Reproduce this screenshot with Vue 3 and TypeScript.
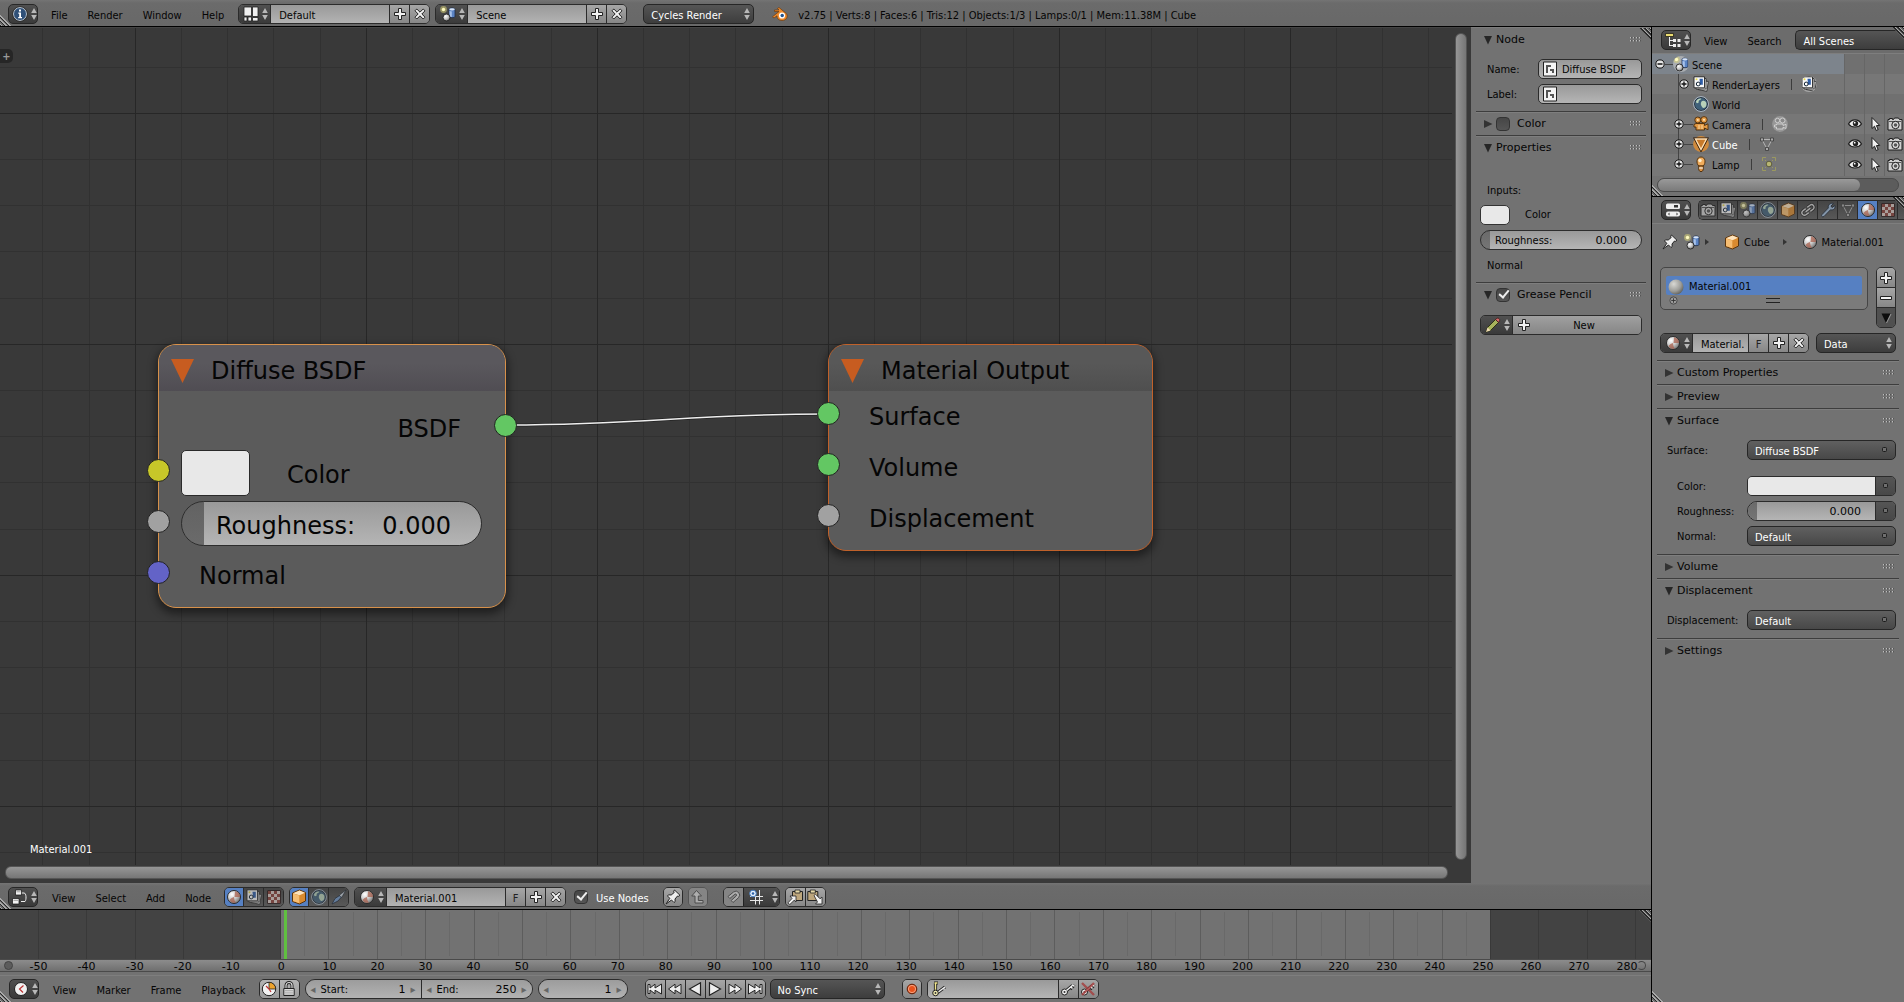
<script setup lang="ts">
import { ref } from 'vue'

interface TreeRow {
  name: string
  icon: string
  kind: 'root' | 'layer' | 'leaf' | 'object'
  data?: string
  active?: boolean
}

const infoMenus = ['File', 'Render', 'Window', 'Help']
const nodeMenus = ['View', 'Select', 'Add', 'Node']
const timeMenus = ['View', 'Marker', 'Frame', 'Playback']
const stats = 'v2.75 | Verts:8 | Faces:6 | Tris:12 | Objects:1/3 | Lamps:0/1 | Mem:11.38M | Cube'

const rows: TreeRow[] = [
  { name: 'Scene', icon: 'scene', kind: 'root' },
  { name: 'RenderLayers', icon: 'layers', kind: 'layer', data: 'layers' },
  { name: 'World', icon: 'world', kind: 'leaf' },
  { name: 'Camera', icon: 'camera', kind: 'object', data: 'camera-data' },
  { name: 'Cube', icon: 'mesh', kind: 'object', data: 'mesh-data', active: true },
  { name: 'Lamp', icon: 'lamp', kind: 'object', data: 'lamp-data' },
]

const tabs = ['photo', 'layers', 'scene', 'world', 'cube', 'chain', 'wrench', 'mesh-data', 'material', 'texture']
const activeTab = ref('material')

const frames = Array.from({ length: 34 }, (_, i) => (i - 5) * 10)
const transport = [
  { icon: 'first', label: 'Jump to start' },
  { icon: 'prev', label: 'Previous keyframe' },
  { icon: 'back', label: 'Play reversed' },
  { icon: 'play', label: 'Play' },
  { icon: 'next', label: 'Next keyframe' },
  { icon: 'last', label: 'Jump to end' },
]

const useNodes = ref(true)
const nodeColor = ref(false)
const grease = ref(true)
</script>

<template>
  <svg class="defs" aria-hidden="true">
    <defs>
      <radialGradient id="g-ball" cx=".35" cy=".3" r=".8">
        <stop offset="0" stop-color="#fff" /><stop offset=".5" stop-color="#c9c9c9" /><stop offset="1" stop-color="#666" />
      </radialGradient>
      <radialGradient id="g-grey" cx=".35" cy=".3" r=".8">
        <stop offset="0" stop-color="#d8d8d4" /><stop offset=".6" stop-color="#9c9c98" /><stop offset="1" stop-color="#55554f" />
      </radialGradient>
      <pattern id="grid" width="231" height="231" x="135" y="85" patternUnits="userSpaceOnUse">
        <path d="M46.5 0V231M92.5 0V231M138.5 0V231M185.5 0V231M0 46.5H231M0 92.5H231M0 138.5H231M0 185.5H231" stroke="#313131" />
        <path d="M.5 0V231M0 .5H231" stroke="#272727" />
      </pattern>
      <pattern id="ticks-dark" width="242" height="60" x="38" patternUnits="userSpaceOnUse">
        <path d="M.5 0V60M48.5 0V60M97.5 0V60M145.5 0V60M194.5 0V60" stroke="#393939" />
      </pattern>
      <pattern id="ticks" width="242" height="60" x="-1" patternUnits="userSpaceOnUse">
        <path d="M.5 0V60M48.5 0V60M97.5 0V60M145.5 0V60M194.5 0V60" stroke="#5d5d5d" />
        <path d="M24.5 2V46M73.5 2V46M121.5 2V46M169.5 2V46M218.5 2V46" stroke="#696969" />
      </pattern>
    </defs>
    <symbol id="i-arrows" viewBox="0 0 6 12"><path d="M3 0 5.800 5H.2zM3 12 5.800 7H.2z" fill="#b8b8b8" /></symbol>
    <symbol id="i-info" viewBox="0 0 16 16">
      <circle cx="8" cy="8" r="6.500" fill="#2f5078" stroke="#c6d0dc" /><circle cx="8" cy="8" r="7.400" fill="none" stroke="#222" stroke-width=".6" />
      <path d="M7 3.500h2v2H7zM6.300 6.500H9v4.500h1v1.300H6.200V11h1V7.800h-.9z" fill="#fff" />
    </symbol>
    <symbol id="i-layout" viewBox="0 0 16 16">
      <path d="M1 1h7.500v9H1zM9.500 1H15v9.500H9.500zM1 11h3v4H1zM5 11h3.500v4H5zM9.500 11.500H15V15H9.500z" fill="#f0f0f0" stroke="#222" stroke-width=".8" />
    </symbol>
    <symbol id="i-scene" viewBox="0 0 16 16">
      <circle cx="3.500" cy="3.500" r="3.400" fill="#d9d47a" opacity=".55" /><circle cx="3.500" cy="3.500" r="1.700" fill="#fffbc0" />
      <path d="M9 3.500c0-2 6-2 6 0v7c0 1.600-6 1.600-6 0z" fill="#5b84c4" stroke="#1c2a44" stroke-width=".8" />
      <path d="M9.500 4.500c.5.700 1.500.9 2.300.9V11c-1 0-1.800-.2-2.300-.7z" fill="#a9c3ea" />
      <ellipse cx="12" cy="3.300" rx="2.800" ry="1.100" fill="#d9e6f9" />
      <circle cx="6.500" cy="11.500" r="3.500" fill="url(#g-ball)" stroke="#222" stroke-width=".9" />
    </symbol>
    <symbol id="i-plus" viewBox="0 0 16 16"><path d="M6.500 2.500h3v4h4v3h-4v4h-3v-4h-4v-3h4z" fill="#f2f2f2" stroke="#222" /></symbol>
    <symbol id="i-minus" viewBox="0 0 16 16"><path d="M2.500 6.500h11v3h-11z" fill="#f2f2f2" stroke="#222" /></symbol>
    <symbol id="i-x" viewBox="0 0 16 16"><path d="M3 4.800 4.800 3 8 6.200 11.200 3 13 4.800 9.800 8l3.200 3.200-1.800 1.800L8 9.800 4.800 13 3 11.200 6.200 8z" fill="#f2f2f2" stroke="#222" /></symbol>
    <symbol id="i-down" viewBox="0 0 16 16"><path d="M3.500 3.500h9L8 13z" fill="#0d0d0d" /><path d="M13 4 8.500 13" stroke="#999" /></symbol>
    <symbol id="i-blender" viewBox="0 0 16 16">
      <path d="M.5 10.800 7 5.500H2.500V4H7L5.500 2.500 7 1.500l7.500 6.200c1.800 2.800 0 6.800-4.500 6.800-3 0-5.300-1.800-5-4.700L2 12z" fill="#ee8a2c" stroke="#6d3a0b" stroke-width=".7" />
      <circle cx="10" cy="9.500" r="3.100" fill="#fff" /><circle cx="10.200" cy="9.500" r="1.700" fill="#23548f" />
    </symbol>
    <symbol id="i-tree" viewBox="0 0 16 16">
      <path d="M4.500 5v9M4.500 8.500H8M4.500 13.500H8" stroke="#eee" fill="none" />
      <path d="M.5 1.500h8v3h-8z" fill="#eadb70" stroke="#111" stroke-width=".7" /><path d="M8 7h3v3H8zM12.500 7h3v3h-3zM8 12h3v3H8zM12.500 12h3v3h-3z" fill="#eee" />
    </symbol>
    <symbol id="i-layers" viewBox="0 0 16 16">
      <path d="m6 4 9.300 1.500-1.500 9.800L5 13.500z" fill="#ddd" stroke="#222" stroke-width=".8" /><path d="M3 2.500h10v10.500H3z" fill="#e6e6e6" stroke="#222" stroke-width=".8" />
      <path d="M1 .8h10.500v11H1z" fill="#f8f8f8" stroke="#222" stroke-width=".9" />
      <path d="M6.500 2.800h3.300v6H7z" fill="#2f5ea8" /><circle cx="5.200" cy="8" r="1.900" fill="#fff" stroke="#123" /><circle cx="3.500" cy="3.300" r="1" fill="#e8d94a" />
    </symbol>
    <symbol id="i-world" viewBox="0 0 16 16">
      <circle cx="8" cy="8" r="6.600" fill="#3f6079" stroke="#1c2733" /><circle cx="8" cy="8" r="7.400" fill="none" stroke="#b9cbe0" stroke-width=".8" />
      <path d="M3 5.500C4 3 6 2.200 8 2.500c1 .5-1 1.500-2 2s.5 2-1 2.500-2-.5-2-1.500zM8.500 5.500C10 4 13.500 5 13.500 8s-2 4-3 4-2-2-2.500-3 0-2.500.5-3.500z" fill="#b9d2b9" />
    </symbol>
    <symbol id="i-camera" viewBox="0 0 16 16">
      <g fill="#e39a45" stroke="#4d2b07" stroke-width=".9"><circle cx="4.800" cy="4" r="3" /><circle cx="11" cy="3.800" r="3.200" /><path d="M3 7.500h8.500v2l3.500-1.700v6l-3.500-1.800V14H3V11H1V8.500z" /></g>
      <circle cx="4.800" cy="4" r="1" fill="#ffe2b0" /><circle cx="11" cy="3.800" r="1.100" fill="#ffe2b0" /><path d="M6 9v4M9 9v4" stroke="#fbd9a4" />
    </symbol>
    <symbol id="i-camera-data" viewBox="0 0 16 16">
      <circle cx="8" cy="8" r="7.900" fill="#979797" /><g fill="#8a8a8a" stroke="#d4d4d4" stroke-width=".9"><circle cx="5.500" cy="4.500" r="2.200" /><circle cx="10.500" cy="4.500" r="2.500" /><path d="M4.500 8h6.500v1.500L14 8.300v4.200l-3-1.300V13H4.500v-2H2.500V9h2z" /></g>
    </symbol>
    <symbol id="i-mesh" viewBox="0 0 16 16">
      <circle cx="8" cy="8" r="7.900" fill="#d08a3c" /><path d="M2.500 3h11L8 13.500z" fill="none" stroke="#2b1503" stroke-width="3" /><path d="M2.500 3h11L8 13.500z" fill="#c87a2a" stroke="#ffe0b4" stroke-width="1.400" />
    </symbol>
    <symbol id="i-lamp" viewBox="0 0 16 16">
      <path d="M5.800 10C3 7.500 3.300 1 8 1s5 6.500 2.200 9z" fill="#f0ac5c" stroke="#4d2b07" stroke-width=".9" /><circle cx="7" cy="4.500" r="1.700" fill="#fff0cf" /><path d="M5.800 10h4.400v4L9 15.500H7L5.800 14z" fill="#d99244" stroke="#4d2b07" stroke-width=".9" /><path d="M6 12h4" stroke="#fff" />
    </symbol>
    <symbol id="i-mesh-data" viewBox="0 0 16 16">
      <path d="M3 3.500h10L8 13z" fill="none" stroke="#b4b4b4" /><path d="M1.500 2h3v3h-3zM11.500 2h3v3h-3zM6.500 11.500h3v3h-3z" fill="#a9a9a9" stroke="#3a3a3a" stroke-width=".8" />
    </symbol>
    <symbol id="i-lamp-data" viewBox="0 0 16 16">
      <g opacity=".8"><circle cx="8" cy="8" r="2.800" fill="#c9c572" stroke="#55542e" /><path d="M1.500 5V1.500H5M11 1.500h3.500V5M14.500 11v3.500H11M5 14.500H1.500V11M4 4l1 1M12 4l-1 1M4 12l1-1M12 12l-1-1" fill="none" stroke="#a5a25a" /></g>
    </symbol>
    <symbol id="i-eye" viewBox="0 0 16 16"><path d="M1.500 8c3-5.500 10-5.500 13 0-3 4-10 4-13 0z" fill="#eee" stroke="#1d1d1d" stroke-width="1.200" /><circle cx="8.500" cy="7.500" r="2.700" fill="#222" /><circle cx="7.700" cy="6.700" r=".9" fill="#fff" /></symbol>
    <symbol id="i-cursor" viewBox="0 0 16 16"><path d="M5 1.500v11l2.500-2.300 1.700 4.300 2-.9-1.800-4 3.300-.2z" fill="#f2f2f2" stroke="#1d1d1d" /></symbol>
    <symbol id="i-photo" viewBox="0 0 16 16">
      <path d="M1 3.500h1.500v-1h3v1h1l1-1.500h4l1 1.500H15V14H1z" fill="#cfcfcf" stroke="#1d1d1d" /><path d="M2 5.500h12" stroke="#555" /><circle cx="8.500" cy="9" r="3.700" fill="#ddd" stroke="#1d1d1d" /><circle cx="8.500" cy="9" r="1.800" fill="#555" />
    </symbol>
    <symbol id="i-props" viewBox="0 0 16 16"><rect x="1" y="1.500" width="14" height="5.500" rx="1.500" fill="#eee" /><path d="M9 3h4v2.500H9z" fill="#333" /><rect x="1" y="9.500" width="14" height="5" rx="2" fill="#eee" /><path d="m3 12 1.500-1.500v3zM13 12l-1.500-1.500v3z" fill="#333" /></symbol>
    <symbol id="i-chain" viewBox="0 0 16 16"><g fill="none" transform="rotate(-38 8 8)"><path d="M7 5.500H3.500a2.500 2.500 0 0 0 0 5H7M9 5.500h3.500a2.500 2.500 0 0 1 0 5H9M5 8h6" stroke="#222" stroke-width="3" /><path d="M7 5.500H3.500a2.500 2.500 0 0 0 0 5H7M9 5.500h3.500a2.500 2.500 0 0 1 0 5H9M5 8h6" stroke="#d4d4d4" stroke-width="1.400" /></g></symbol>
    <symbol id="i-wrench" viewBox="0 0 16 16"><path d="M13.500 1.500 11 4l1 1.500 3-2c.5 3-1.500 5-4.500 4.300L4 14.500c-1.500 1.200-3.300-.5-2-2L8.300 6C7.500 3 10.500.5 13.500 1.500z" fill="#9db8d8" stroke="#1f2a38" /></symbol>
    <symbol id="i-material" viewBox="0 0 16 16"><circle cx="8" cy="8" r="6.500" fill="url(#g-ball)" stroke="#2b2b2b" /><path d="M8.500 8 9 2.300c3 .5 5 2.500 5 5.700zM8 8c.3 2.500.5 4.500 2 5.600-2.500.7-5 0-6.500-2.600C4.500 9.500 6.500 8.300 8 8z" fill="#a8604e" opacity=".75" /></symbol>
    <symbol id="i-texture" viewBox="0 0 16 16"><path d="M1.500 1.500h13v13h-13z" fill="#d9c9c4" stroke="#2a1a1a" /><path d="M2 2h3v3H2zM8 2h3v3H8zM5 5h3v3H5zM11 5h3v3h-3zM2 8h3v3H2zM8 8h3v3H8zM5 11h3v3H5zM11 11h3v3h-3z" fill="#8b3f38" /></symbol>
    <symbol id="i-pin" viewBox="0 0 16 16"><path d="M9.500 1 15 6.300l-1.500 1-1-.3-2.500 3 .2 2.500-1.200 1L6.500 11 1 15l3.800-5.700L2.500 7l1-1.200 2.700.2 3-2.500-.5-1.200z" fill="#eee" stroke="#222" /></symbol>
    <symbol id="i-cube" viewBox="0 0 16 16"><path d="M1.500 4 8.500 1l6 2.500v8.500l-6 3-7-2.500z" fill="#d98a2f" stroke="#5b340c" /><path d="m2 4.300 6.500-2.700L14 3.800 8.500 6.300z" fill="#fde3bd" /><path d="m2 4.500 6.300 2v7.800L2 12z" fill="#f6bd72" /></symbol>
    <symbol id="i-dark-ball" viewBox="0 0 16 16"><circle cx="8" cy="8" r="7.500" fill="url(#g-grey)" /></symbol>
    <symbol id="i-expand" viewBox="0 0 10 10"><circle cx="5" cy="5" r="4.100" fill="#e6e6e6" stroke="#161616" /><path d="M2.500 5h5M5 2.500v5" stroke="#111" stroke-width="1.300" /></symbol>
    <symbol id="i-collapse" viewBox="0 0 10 10"><circle cx="5" cy="5" r="4.100" fill="#e6e6e6" stroke="#161616" /><path d="M2.500 5h5" stroke="#111" stroke-width="1.500" /></symbol>
    <symbol id="i-more" viewBox="0 0 10 10"><circle cx="5" cy="5" r="4" fill="#9c9c9c" stroke="#444" /><path d="M2.500 5h5M5 2.500v5" stroke="#333" /></symbol>
    <symbol id="i-nodes" viewBox="0 0 16 16"><path d="M9 4h3c2.500 0 2.500 7 1 8.500H9" fill="none" stroke="#eee" /><path d="M3.500 1h6v5h-6zM.5 9.500h6.500v5.500H.5z" fill="#f2f2f2" stroke="#111" stroke-width=".7" /><path d="M4.500 2.800h4M1.500 11.300h4.500" stroke="#888" stroke-width=".8" /></symbol>
    <symbol id="i-brush" viewBox="0 0 16 16"><path d="M15 1 9 5.500l-1.500 3L9 9l2-1z" fill="#c3ccd6" stroke="#1a222c" stroke-width=".7" /><path d="M8.500 6.500 4 9.500 1 15l6-3 3-3.500z" fill="#6f96c6" stroke="#15202e" stroke-width=".8" /></symbol>
    <symbol id="i-up" viewBox="0 0 16 16"><path d="M6.500 1.500 11.500 7H8.300v4.500H13V14H5V7H1.700z" fill="#adadad" stroke="#4c4c4c" /></symbol>
    <symbol id="i-magnet" viewBox="0 0 16 16"><path d="M3 7.500 8.500 3a3.800 3.800 0 0 1 5 5.700L8 13.500l-1.800-2 5-4.500c1-1.200-.3-2.500-1.300-1.800L4.800 9.500z" fill="#adadad" stroke="#4c4c4c" /></symbol>
    <symbol id="i-snap" viewBox="0 0 16 16"><path d="M2 7.500h13M2 11.500h13M7.500 6v9.500M11.500 1v14.500" stroke="#e6e6e6" /><circle cx="5" cy="4.500" r="3.300" fill="#e8f1fb" stroke="#3f78bd" /><circle cx="5" cy="4.500" r="1.300" fill="#2c62a8" /></symbol>
    <symbol id="i-copy" viewBox="0 0 16 16"><path d="M5.500 2.500h10v9h-10z" fill="#bda67c" stroke="#222" /><path d="M8 1h5v3H8z" fill="#e6d9a8" stroke="#222" stroke-width=".8" /><path d="M3 7h6v6L7.200 11.300 2.800 15.500 1 13.800 5 9.500z" fill="#f2f2f2" stroke="#222" stroke-width=".8" /></symbol>
    <symbol id="i-paste" viewBox="0 0 16 16"><path d="M.8 2.500h10v9H.8z" fill="#bda67c" stroke="#222" /><path d="M3.300 1h5v3h-5z" fill="#e6d9a8" stroke="#222" stroke-width=".8" /><path d="m7 6.500 1.500-1.300L13 9.800 15 8v7H8.500l2-2z" fill="#f2f2f2" stroke="#222" stroke-width=".8" /></symbol>
    <symbol id="i-clock" viewBox="0 0 16 16"><circle cx="8" cy="8" r="6.500" fill="#f2f2f2" stroke="#222" /><path d="m10.500 4.500-4 3.500 3.500 3.500" fill="none" stroke="#b33" stroke-width="1.200" /></symbol>
    <symbol id="i-range" viewBox="0 0 16 16"><circle cx="8" cy="8" r="6.700" fill="#f2f2f2" stroke="#222" /><path d="M8 8V1.300A6.700 6.700 0 0 1 14.700 8z" fill="#eda22c" stroke="#222" stroke-width=".8" /><path d="m5 5 3 3 2 3" fill="none" stroke="#b33" stroke-width="1.200" /></symbol>
    <symbol id="i-lock" viewBox="0 0 16 16"><path d="M5 8V4.500a3 3 0 0 1 6 0V8" fill="none" stroke="#222" stroke-width="3" /><path d="M5 8V4.500a3 3 0 0 1 6 0V8" fill="none" stroke="#ddd" stroke-width="1.200" /><path d="M2.800 7.500h10.400v7H2.800z" fill="#ddd" stroke="#222" /><path d="M4 9.500h8M4 11.200h8M4 13h8" stroke="#999" stroke-width=".7" /></symbol>
    <symbol id="i-first" viewBox="0 0 16 16"><path d="M1 3.500h2V7l5-3.800V7l6.500-4v10L8 9.200v3.600L3 9v3.500H1z" fill="#eee" stroke="#222" /></symbol>
    <symbol id="i-prev" viewBox="0 0 16 16"><path d="M1.500 8 8 3.200V7l6-3.800v9.600L8 9v3.800z" fill="#eee" stroke="#222" /></symbol>
    <symbol id="i-back" viewBox="0 0 16 16"><path d="M2.500 8 13.500 1.800v12.400z" fill="#eee" stroke="#222" stroke-width="1.200" /></symbol>
    <symbol id="i-play" viewBox="0 0 16 16"><path d="M13.500 8 2.500 1.800v12.400z" fill="#eee" stroke="#222" stroke-width="1.200" /></symbol>
    <symbol id="i-next" viewBox="0 0 16 16"><path d="M14.500 8 8 3.200V7L2 3.200v9.600L8 9v3.800z" fill="#eee" stroke="#222" /></symbol>
    <symbol id="i-last" viewBox="0 0 16 16"><path d="M15 3.500h-2V7L8 3.200V7L1.500 3v10L8 9.200v3.600L13 9v3.500h2z" fill="#eee" stroke="#222" /></symbol>
    <symbol id="i-rec" viewBox="0 0 16 16"><circle cx="8" cy="8" r="4.800" fill="#e8521c" stroke="#5c1c06" /><circle cx="8" cy="8" r="3.600" fill="none" stroke="#f9b79a" stroke-width=".8" /></symbol>
    <symbol id="i-key" viewBox="0 0 16 16"><g fill="none"><path d="m6.500 9.500 6-5M10.500 6l2 2M12.500 4.500l2 1.500" stroke="#222" stroke-width="3.200" /><circle cx="4.500" cy="11" r="3" fill="#eee" stroke="#222" /><path d="m6.500 9.500 6.500-5.500M11 6l1.500 1.500M13 4l1.500 1.500" stroke="#eee" stroke-width="1.500" /><circle cx="4.500" cy="11" r="1" fill="#333" /></g></symbol>
    <symbol id="i-key-set" viewBox="0 0 16 16"><path d="M3 2h4M4.500 2v9M6 12l8-6" stroke="#222" stroke-width="3.200" /><path d="M3.500 2h3M4.500 2v9" stroke="#f0e58c" stroke-width="1.400" /><path d="m6 12 8-6M12 7l1.500 1.500" stroke="#eee" stroke-width="1.500" /><circle cx="4.500" cy="12" r="2.800" fill="#efe9ae" stroke="#222" /><circle cx="4.500" cy="12" r=".9" fill="#333" /></symbol>
    <symbol id="i-strike" viewBox="0 0 16 16"><path d="m2 2 12 12M14 2 2 14" stroke="#a63c3c" stroke-width="2.400" opacity=".8" /></symbol>
    <symbol id="i-pencil" viewBox="0 0 16 16"><path d="m1 15 1.500-4.500L10.500 2.500l3 3-8 8z" fill="#a7b25c" stroke="#26280f" stroke-width=".9" /><path d="m10.500 2.500 1.500-1.300c1.500-.6 3 1 2.600 2.300L13.500 5.500z" fill="#d46a6a" stroke="#401a1a" stroke-width=".8" /><path d="m1 15 1.500-4.500 3 3z" fill="#ecd9b0" /></symbol>
    <symbol id="i-field" viewBox="0 0 16 16"><path d="M1.500 1h13v14h-13z" fill="#f4f4f4" stroke="#222" /><path d="M4 4h5v2H6v6H4zM8 8h4v4h-2v-2H8z" fill="#555" /></symbol>
    <symbol id="i-dot" viewBox="0 0 8 8"><rect x="1.500" y="1.500" width="4" height="4" rx="1" fill="#707070" stroke="#1c1c1c" /></symbol>
    <symbol id="i-tri-down" viewBox="0 0 10 10"><path d="M1 1h8L5 9.500z" fill="#262626" /></symbol>
    <symbol id="i-tri-right" viewBox="0 0 10 10"><path d="M1 1v8l8.500-4z" fill="#333" /></symbol>
  </svg>

  <div class="app">
    <header class="bar info">
      <button class="menu-btn editor" aria-label="Editor type"><svg class="ic"><use href="#i-info" /></svg><svg class="ud"><use href="#i-arrows" /></svg></button>
      <nav class="menus"><button v-for="m in infoMenus" :key="m" class="menu">{{ m }}</button></nav>
      <div class="group">
        <button class="menu-btn" aria-label="Browse screens"><svg class="ic"><use href="#i-layout" /></svg><svg class="ud"><use href="#i-arrows" /></svg></button>
        <input class="field w119" aria-label="Screen" value="Default" />
        <button class="tool" aria-label="Add screen"><svg class="ic"><use href="#i-plus" /></svg></button>
        <button class="tool" aria-label="Delete screen"><svg class="ic"><use href="#i-x" /></svg></button>
      </div>
      <div class="group gap5">
        <button class="menu-btn" aria-label="Browse scenes"><svg class="ic"><use href="#i-scene" /></svg><svg class="ud"><use href="#i-arrows" /></svg></button>
        <input class="field w119" aria-label="Scene" value="Scene" />
        <button class="tool" aria-label="Add scene"><svg class="ic"><use href="#i-plus" /></svg></button>
        <button class="tool" aria-label="Delete scene"><svg class="ic"><use href="#i-x" /></svg></button>
      </div>
      <span class="drop engine"><select aria-label="Render engine"><option>Cycles Render</option></select><svg class="ud"><use href="#i-arrows" /></svg></span>
      <svg class="ic logo"><use href="#i-blender" /></svg>
      <span class="stats">{{ stats }}</span>
      <i class="hatch bl"></i>
    </header>

    <div class="work">
      <main class="left">
        <div class="node-area">
          <section class="canvas">
            <svg class="grid"><rect width="100%" height="100%" fill="url(#grid)" /></svg>
            <svg class="wire"><path d="M505 397C650 397 683 386 828 386" fill="none" stroke="#222" stroke-width="3" /><path d="M505 397C650 397 683 386 828 386" fill="none" stroke="#eee" stroke-width="1.400" /></svg>
            <button class="region-toggle" aria-label="Show tool shelf">+</button>

            <article class="node diffuse">
              <h2><svg class="fold" viewBox="0 0 24 24"><path d="M0 0h23L11.500 24z" fill="#c75c20" /></svg>Diffuse BSDF</h2>
              <div class="out">BSDF<i class="sock source green"></i></div>
              <div class="nrow color"><i class="sock yellow"></i><button class="nswatch" aria-label="Color"></button><span>Color</span></div>
              <div class="nrow"><i class="sock grey"></i>
                <label class="nslider"><span>Roughness:</span><input value="0.000" /></label></div>
              <div class="nrow plain"><i class="sock blue"></i>Normal</div>
            </article>

            <article class="node output">
              <h2><svg class="fold" viewBox="0 0 24 24"><path d="M0 0h23L11.500 24z" fill="#c75c20" /></svg>Material Output</h2>
              <div class="nrow plain"><i class="sock green"></i>Surface</div>
              <div class="nrow plain"><i class="sock green"></i>Volume</div>
              <div class="nrow plain"><i class="sock grey"></i>Displacement</div>
            </article>

            <span class="mat-name">Material.001</span>
            <div class="vbar"></div>
            <div class="hbar"></div>
          </section>

          <aside class="npanel">
            <i class="hatch tr"></i>
            <h3 class="ptitle first"><svg class="tri"><use href="#i-tri-down" /></svg>Node<i class="grip"></i></h3>
            <div class="nfields">
              <label class="frow"><span>Name:</span><span class="iconfield"><svg class="ic"><use href="#i-field" /></svg><input value="Diffuse BSDF" /></span></label>
              <label class="frow"><span>Label:</span><span class="iconfield"><svg class="ic"><use href="#i-field" /></svg><input value="" /></span></label>
            </div>
            <h3 class="ptitle"><svg class="tri"><use href="#i-tri-right" /></svg><label class="check"><input v-model="nodeColor" type="checkbox" />Color</label><i class="grip"></i></h3>
            <h3 class="ptitle"><svg class="tri"><use href="#i-tri-down" /></svg>Properties<i class="grip"></i></h3>
            <div class="nprops">
              <p class="lab">Inputs:</p>
              <div class="crow"><button class="swatch small" aria-label="Color"></button>Color</div>
              <label class="slider"><span>Roughness:</span><input class="num" value="0.000" /></label>
              <p class="lab">Normal</p>
            </div>
            <h3 class="ptitle"><svg class="tri"><use href="#i-tri-down" /></svg><label class="check"><input v-model="grease" type="checkbox" />Grease Pencil</label><i class="grip"></i></h3>
            <div class="group gp">
              <button class="menu-btn" aria-label="Browse grease pencil"><svg class="ic"><use href="#i-pencil" /></svg><svg class="ud"><use href="#i-arrows" /></svg></button>
              <button class="new"><svg class="ic"><use href="#i-plus" /></svg><span>New</span></button>
            </div>
          </aside>
        </div>

        <header class="bar nodes">
          <button class="menu-btn editor" aria-label="Editor type"><svg class="ic"><use href="#i-nodes" /></svg><svg class="ud"><use href="#i-arrows" /></svg></button>
          <nav class="menus"><button v-for="m in nodeMenus" :key="m" class="menu">{{ m }}</button></nav>
          <div class="group">
            <button class="tab on" aria-label="Shader nodes"><svg class="ic"><use href="#i-material" /></svg></button>
            <button class="tab" aria-label="Compositing nodes"><svg class="ic"><use href="#i-layers" /></svg></button>
            <button class="tab" aria-label="Texture nodes"><svg class="ic"><use href="#i-texture" /></svg></button>
          </div>
          <div class="group gap5">
            <button class="tab on" aria-label="Object"><svg class="ic"><use href="#i-cube" /></svg></button>
            <button class="tab" aria-label="World"><svg class="ic"><use href="#i-world" /></svg></button>
            <button class="tab" aria-label="Line style"><svg class="ic"><use href="#i-brush" /></svg></button>
          </div>
          <div class="group gap5">
            <button class="menu-btn" aria-label="Browse materials"><svg class="ic"><use href="#i-material" /></svg><svg class="ud"><use href="#i-arrows" /></svg></button>
            <input class="field w119" aria-label="Material" value="Material.001" />
            <button class="tool letter">F</button>
            <button class="tool" aria-label="Add material"><svg class="ic"><use href="#i-plus" /></svg></button>
            <button class="tool" aria-label="Unlink material"><svg class="ic"><use href="#i-x" /></svg></button>
          </div>
          <label class="check use"><input v-model="useNodes" type="checkbox" /><span>Use Nodes</span></label>
          <div class="group pinbtn"><button class="tool" aria-label="Pin"><svg class="ic"><use href="#i-pin" /></svg></button></div>
          <div class="group gap5"><button class="tool off" aria-label="Go to parent"><svg class="ic"><use href="#i-up" /></svg></button></div>
          <div class="group gap15">
            <button class="tool off" aria-label="Snap"><svg class="ic"><use href="#i-magnet" /></svg></button>
            <button class="menu-btn snapmode" aria-label="Snap element"><svg class="ic"><use href="#i-snap" /></svg><svg class="ud"><use href="#i-arrows" /></svg></button>
          </div>
          <div class="group gap5">
            <button class="tool" aria-label="Copy nodes"><svg class="ic"><use href="#i-copy" /></svg></button>
            <button class="tool" aria-label="Paste nodes"><svg class="ic"><use href="#i-paste" /></svg></button>
          </div>
          <i class="hatch bl"></i>
        </header>

        <section class="timeline">
          <div class="track">
            <svg class="grid"><rect width="100%" height="100%" fill="url(#ticks-dark)" /></svg>
            <div class="range"><svg class="grid"><rect width="100%" height="100%" fill="url(#ticks)" /></svg></div>
            <div class="playhead"></div>
            <i class="hatch tr"></i>
          </div>
          <div class="scale"><span class="knob"></span><span v-for="f in frames" :key="f" class="frame" :class="{ neg: f < 0 }">{{ f }}</span><span class="knob end-knob"></span></div>
        </section>

        <footer class="bar time">
          <button class="menu-btn editor" aria-label="Editor type"><svg class="ic"><use href="#i-clock" /></svg><svg class="ud"><use href="#i-arrows" /></svg></button>
          <nav class="menus"><button v-for="m in timeMenus" :key="m" class="menu">{{ m }}</button></nav>
          <div class="group light">
            <button class="tool" aria-label="Use preview range"><svg class="ic"><use href="#i-range" /></svg></button>
            <button class="tool" aria-label="Lock time cursor"><svg class="ic"><use href="#i-lock" /></svg></button>
          </div>
          <div class="group round gap5">
            <label class="stepper start"><i>◂</i><span>Start:</span><input class="num" value="1" /><i>▸</i></label>
            <label class="stepper end"><i>◂</i><span>End:</span><input class="num" value="250" /><i>▸</i></label>
          </div>
          <div class="group round gap5">
            <label class="stepper current"><i>◂</i><input class="num" aria-label="Current frame" value="1" /><i>▸</i></label>
          </div>
          <div class="group gap17"><button v-for="t in transport" :key="t.icon" class="tool" :aria-label="t.label"><svg class="ic"><use :href="'#i-' + t.icon" /></svg></button></div>
          <span class="drop sync"><select aria-label="Sync mode"><option>No Sync</option></select><svg class="ud"><use href="#i-arrows" /></svg></span>
          <div class="group gap17"><button class="tool" aria-label="Record"><svg class="ic"><use href="#i-rec" /></svg></button></div>
          <div class="group gap5">
            <span class="keyfield"><svg class="ic"><use href="#i-key-set" /></svg><input aria-label="Active keying set" value="" /></span>
            <button class="tool" aria-label="Insert keyframe"><svg class="ic"><use href="#i-key" /></svg></button>
            <button class="tool" aria-label="Delete keyframe"><svg class="ic"><use href="#i-key" /><use href="#i-strike" /></svg></button>
          </div>
          <i class="hatch bl"></i>
        </footer>
      </main>

      <aside class="side">
        <section class="outliner">
          <header class="bar sub">
            <button class="menu-btn editor" aria-label="Editor type"><svg class="ic"><use href="#i-tree" /></svg><svg class="ud"><use href="#i-arrows" /></svg></button>
            <nav class="menus"><button class="menu">View</button><button class="menu">Search</button></nav>
            <span class="drop scenes"><select aria-label="Display mode"><option>All Scenes</option></select></span>
            <i class="hatch tr"></i>
          </header>
          <ul class="tree">
            <li v-for="r in rows" :key="r.name" :class="[r.kind, { active: r.active }]">
              <div class="entry">
                <svg v-if="r.kind !== 'leaf'" class="exp"><use :href="r.kind === 'root' ? '#i-collapse' : '#i-expand'" /></svg>
                <i class="stem"></i>
                <svg class="ic main"><use :href="'#i-' + r.icon" /></svg>
                <span class="name">{{ r.name }}</span>
                <template v-if="r.data"><i class="sep"></i><svg class="ic extra"><use :href="'#i-' + r.data" /></svg></template>
              </div>
              <span v-for="c in ['eye', 'cursor', 'photo']" :key="c" class="col"><svg v-if="r.kind === 'object'" class="ic"><use :href="'#i-' + c" /></svg></span>
            </li>
          </ul>
          <div class="oscroll"><div class="thumb"></div></div>
          <i class="hatch bl"></i>
        </section>

        <section class="props">
          <header class="bar sub">
            <button class="menu-btn editor" aria-label="Editor type"><svg class="ic"><use href="#i-props" /></svg><svg class="ud"><use href="#i-arrows" /></svg></button>
            <div class="group tabs">
              <button v-for="t in tabs" :key="t" class="tab" :class="{ on: t === activeTab }" :aria-label="t" @click="activeTab = t"><svg class="ic"><use :href="'#i-' + t" /></svg></button>
              <button class="tab part" aria-label="More"></button>
            </div>
            <i class="hatch tr"></i>
          </header>

          <div class="crumbs">
            <svg class="ic"><use href="#i-pin" /></svg><svg class="ic scene"><use href="#i-scene" /></svg><i class="arrow"></i>
            <svg class="ic item"><use href="#i-cube" /></svg><span>Cube</span><i class="arrow far"></i>
            <svg class="ic item"><use href="#i-material" /></svg><span>Material.001</span>
          </div>

          <div class="slots">
            <div class="slotbox">
              <div class="slot"><svg class="ic"><use href="#i-dark-ball" /></svg>Material.001</div>
              <div class="slotfoot"><svg class="exp"><use href="#i-more" /></svg><i class="handle"></i></div>
            </div>
            <div class="slotbtns">
              <button class="tool" aria-label="Add slot"><svg class="ic"><use href="#i-plus" /></svg></button>
              <button class="tool" aria-label="Remove slot"><svg class="ic"><use href="#i-minus" /></svg></button>
              <button class="tool dark" aria-label="Slot menu"><svg class="ic"><use href="#i-down" /></svg></button>
            </div>
          </div>

          <div class="matrow">
            <div class="group">
              <button class="menu-btn" aria-label="Browse materials"><svg class="ic"><use href="#i-material" /></svg><svg class="ud"><use href="#i-arrows" /></svg></button>
              <input class="field w56" aria-label="Material name" value="Material." />
              <button class="tool letter">F</button>
              <button class="tool" aria-label="Add material"><svg class="ic"><use href="#i-plus" /></svg></button>
              <button class="tool" aria-label="Unlink material"><svg class="ic"><use href="#i-x" /></svg></button>
            </div>
            <span class="drop data"><select aria-label="Link"><option>Data</option></select><svg class="ud"><use href="#i-arrows" /></svg></span>
          </div>

          <h3 class="ptitle"><svg class="tri"><use href="#i-tri-right" /></svg>Custom Properties<i class="grip"></i></h3>
          <h3 class="ptitle"><svg class="tri"><use href="#i-tri-right" /></svg>Preview<i class="grip"></i></h3>
          <h3 class="ptitle"><svg class="tri"><use href="#i-tri-down" /></svg>Surface<i class="grip"></i></h3>
          <div class="pbody surface">
            <label class="prow shader"><span>Surface:</span><span class="drop"><select><option>Diffuse BSDF</option></select><svg class="dot"><use href="#i-dot" /></svg></span></label>
            <div class="prow in"><span>Color:</span><div class="group"><button class="swatch" aria-label="Color"></button><button class="link" aria-label="Link color"><svg class="dot"><use href="#i-dot" /></svg></button></div></div>
            <div class="prow in"><label for="rough">Roughness:</label><div class="group cap"><input id="rough" class="num rough" value="0.000" /><button class="link" aria-label="Link roughness"><svg class="dot"><use href="#i-dot" /></svg></button></div></div>
            <label class="prow in"><span>Normal:</span><span class="drop"><select><option>Default</option></select><svg class="dot"><use href="#i-dot" /></svg></span></label>
          </div>
          <h3 class="ptitle"><svg class="tri"><use href="#i-tri-right" /></svg>Volume<i class="grip"></i></h3>
          <h3 class="ptitle"><svg class="tri"><use href="#i-tri-down" /></svg>Displacement<i class="grip"></i></h3>
          <div class="pbody">
            <label class="prow"><span>Displacement:</span><span class="drop"><select><option>Default</option></select><svg class="dot"><use href="#i-dot" /></svg></span></label>
          </div>
          <h3 class="ptitle"><svg class="tri"><use href="#i-tri-right" /></svg>Settings<i class="grip"></i></h3>
          <i class="hatch bl"></i>
        </section>
      </aside>
    </div>
  </div>
</template>

<style>
body {
  margin: 0;
  background: #727272;
}
</style>

<style scoped>
.defs { position: absolute; width: 0; height: 0; }
* { box-sizing: border-box; }
.app {
  display: flex;
  flex-direction: column;
  height: 100vh;
  overflow: hidden;
  font: 11px/14px "DejaVu Sans Condensed", "DejaVu Sans", sans-serif;
  color: #050505;
  background: #727272;
}
button, input, select {
  font: inherit;
  color: inherit;
  margin: 0;
  padding: 0;
  border: 0;
  outline: 0;
  background: none;
  border-radius: 0;
  min-width: 0;
}
h2, h3, p, ul { margin: 0; padding: 0; font-weight: normal; }
i { font-style: normal; }
.ic { width: 16px; height: 16px; flex: none; display: block; }
.ud { width: 6px; height: 12px; flex: none; display: block; }

/* header bars */
.bar {
  position: relative;
  flex: none;
  display: flex;
  align-items: center;
  height: 27px;
  padding: 2px 0 0 8px;
  background: linear-gradient(#747474, #6b6b6b 3px, #686868);
  border-bottom: 1px solid #000;
}
.menus { display: flex; margin: 0 4px 0 3px; }
.nodes .menus { margin: 0 3px 0 4px; }
.menu { padding: 3px 10px 0; line-height: 18px; }
.menu-btn {
  display: flex;
  align-items: center;
  gap: 3px;
  width: 31px;
  height: 100%;
  padding-left: 4px;
  background: linear-gradient(#505050, #3a3a3a);
}
.menu-btn.editor {
  width: 30px;
  height: 20px;
  padding-left: 3px;
  border: 1px solid #272727;
  border-radius: 5px;
}
.group {
  display: flex;
  flex: none;
  height: 20px;
  border: 1px solid #2b2b2b;
  border-radius: 5px;
  overflow: hidden;
}
.gap5 { margin-left: 5px; }
.gap15 { margin-left: 15px; }
.gap17 { margin-left: 17px; }
.field {
  padding: 3px 0 0 8px;
  background: linear-gradient(#999, #b3b3b3);
  border-left: 1px solid #2b2b2b;
}
.w119 { width: 119px; }
.w56 { width: 56px; }
.tool {
  display: flex;
  align-items: center;
  justify-content: center;
  width: 20px;
  border-left: 1px solid #2b2b2b;
  background: linear-gradient(#a6a6a6, #878787);
}
.tool:first-child { border-left: 0; width: 19px; }
.tool.letter { padding-top: 3px; color: #222; }
.group:has(.tool:first-child:last-child) .tool { width: 18px; }
.group:has(.off:first-child:last-child) { border-color: #555; }
.tool.off { background: #858585; }
.light .tool { background: linear-gradient(#b4b4b4, #9b9b9b); }
.drop { position: relative; display: flex; flex: none; height: 20px; }
.drop select {
  appearance: none;
  width: 100%;
  padding: 3px 16px 0 7px;
  border: 1px solid #262626;
  border-radius: 5px;
  background: linear-gradient(#555, #3d3d3d);
  color: #fff;
}
.drop .ud { position: absolute; right: 4px; top: 4px; }
.engine { width: 111px; margin-left: 16px; }
.logo { margin-left: 18px; }
.stats { margin-left: 10px; padding-top: 3px; white-space: nowrap; }
.hatch {
  position: absolute;
  width: 12px;
  height: 12px;
  background: repeating-linear-gradient(45deg, #2a2a2a 0 1px, #a8a8a8 1px 2px, #6a6a6a 2px 3px);
}
.hatch.bl { left: 0; bottom: 0; clip-path: polygon(0 0, 100% 100%, 0 100%); }
.hatch.tr { right: 0; top: 0; clip-path: polygon(0 0, 100% 0, 100% 100%); }

/* work area */
.work { flex: 1; display: flex; min-height: 0; }
.left { flex: 1; min-width: 0; display: flex; flex-direction: column; border-right: 1px solid #000; }
.node-area { flex: 1; min-height: 0; display: flex; }
.canvas { position: relative; flex: 1; min-width: 0; overflow: hidden; background: #393939; border-top: 1px solid #444; }
.grid, .wire { position: absolute; inset: 0; width: 100%; height: 100%; }
.canvas .grid { width: calc(100% - 19px); height: calc(100% - 18px); }
.region-toggle {
  position: absolute;
  left: 0;
  top: 21px;
  width: 13px;
  height: 14px;
  border-radius: 0 5px 5px 0;
  background: #262626;
  color: #9a9a9a;
  font-weight: bold;
  line-height: 13px;
}
.vbar, .hbar { position: absolute; border-radius: 6px; border: 1px solid #555; }
.vbar { right: 4px; top: 5px; bottom: 23px; width: 12px; background: linear-gradient(90deg, #969696, #767676); }
.hbar { left: 5px; right: 23px; bottom: 4px; height: 13px; background: linear-gradient(#969696, #767676); }
.mat-name { position: absolute; left: 30px; bottom: 26px; color: #fff; }

/* nodes */
.node {
  position: absolute;
  top: 316px;
  border: 1px solid #d8914a;
  border-radius: 18px;
  background: #5b5b5b;
  box-shadow: 0 4px 9px 2px rgba(0, 0, 0, .45);
  font: 24px/28px "DejaVu Sans", sans-serif;
  color: #050505;
}
.diffuse { left: 158px; width: 348px; height: 264px; }
.output { left: 828px; width: 325px; height: 207px; border-color: #c0612a; }
.node h2 {
  display: flex;
  align-items: center;
  gap: 16px;
  height: 46px;
  padding: 6px 0 0 12px;
  font-size: 24px;
  border-radius: 17px 17px 0 0;
  background: linear-gradient(#5a585d 40%, #504d53);
}
.output h2 { background: linear-gradient(#585858 40%, #4f4f4f); }
.fold { width: 24px; height: 24px; flex: none; }
.out { position: relative; height: 56px; padding: 24px 44px 0 0; text-align: right; }
.nrow { position: relative; display: flex; align-items: center; height: 51px; padding-left: 22px; }
.nrow.plain { padding: 3px 0 0 40px; }
.output .nrow:nth-child(2) { margin-top: -1px; }
.nrow.color span { margin: 4px 0 0 37px; }
.nswatch { width: 69px; height: 46px; border: 1px solid #2a2a2a; border-radius: 5px; background: #e8e8e8; }
.nslider {
  display: flex;
  align-items: center;
  justify-content: space-between;
  width: 301px;
  height: 45px;
  padding: 4px 30px 0 34px;
  border: 1px solid #2d2d2d;
  border-radius: 23px;
  background: linear-gradient(90deg, rgba(75, 75, 75, .7) 22px, transparent 22px), linear-gradient(#999, #b5b5b5);
}
.nslider input { width: 80px; text-align: right; }
.sock { position: absolute; left: -12px; top: 12px; width: 23px; height: 23px; border: 1px solid #222; border-radius: 50%; }
.sock.source { left: auto; right: -12px; top: 23px; }
.green { background: #63c763; }
.yellow { background: #c7c729; }
.grey { background: #a1a1a1; }
.blue { background: #6363c7; }

/* sidebar of the node editor */
.npanel { position: relative; width: 180px; flex: none; padding: 0 5px; border-top: 1px solid #7d7d7d; background: #727272; }
.ptitle {
  display: flex;
  align-items: center;
  height: 24px;
  padding: 0 5px 0 7px;
  border-top: 1px solid #3d3d3d;
  box-shadow: inset 0 1px #7e7e7e;
  font: 11px/14px "DejaVu Sans", sans-serif;
}
.ptitle.first { border-color: transparent; box-shadow: none; padding-bottom: 2px; }
.tri { width: 10px; height: 10px; margin-right: 3px; flex: none; }
.grip {
  width: 11px;
  height: 5px;
  margin-left: auto;
  background: repeating-linear-gradient(90deg, #bdbdbd 0 1px, #555 1px 2px, transparent 2px 3px);
  mask: repeating-linear-gradient(#000 0 1px, #0006 1px 2px, transparent 2px 3px);
}
.check { display: flex; align-items: center; }
.check input {
  appearance: none;
  width: 14px;
  height: 14px;
  margin-right: 7px;
  border: 1px solid #333;
  border-radius: 4px;
  background: linear-gradient(#464646, #555);
  position: relative;
}
.check input:checked::after {
  content: "";
  position: absolute;
  left: 4px;
  top: -1px;
  width: 4px;
  height: 8px;
  border: solid #eee;
  border-width: 0 2px 2px 0;
  transform: rotate(40deg);
}
.nfields { display: flex; flex-direction: column; gap: 5px; padding: 7px 4px 7px 11px; }
.frow { display: flex; align-items: center; }
.frow > span:first-child { width: 51px; padding-top: 2px; }
.iconfield, .keyfield {
  display: flex;
  align-items: center;
  flex: 1;
  min-width: 0;
  height: 20px;
  padding-left: 3px;
  border: 1px solid #2b2b2b;
  border-radius: 5px;
  background: linear-gradient(#999, #b5b5b5);
}
.iconfield input { flex: 1; padding: 2px 0 0 4px; }
.nprops { padding: 21px 4px 7px; }
.lab { height: 20px; padding: 1px 0 0 7px; line-height: 20px; }
.crow { display: flex; align-items: center; gap: 15px; margin: 5px 0; }
.swatch { flex: 1; background: #e8e8e8; }
.swatch.small { flex: none; width: 30px; height: 20px; border: 1px solid #333; border-radius: 5px; }
.slider {
  display: flex;
  align-items: center;
  justify-content: space-between;
  height: 20px;
  margin-bottom: 5px;
  padding: 2px 14px 0;
  border: 1px solid #2d2d2d;
  border-radius: 10px;
  background: linear-gradient(90deg, rgba(75, 75, 75, .6) 9px, transparent 9px), linear-gradient(#999, #b5b5b5);
}
.num { font-family: "DejaVu Sans", sans-serif; text-align: right; }
.slider .num { width: 60px; }
.gp { margin: 9px 4px 0; }
.new { display: flex; align-items: center; flex: 1; padding-left: 3px; border-left: 1px solid #2b2b2b; background: linear-gradient(#a0a0a0, #868686); }
.new span { flex: 1; padding: 2px 5px 0 0; text-align: center; }

/* node header */
.tab {
  display: flex;
  align-items: center;
  justify-content: center;
  width: 20px;
  border-left: 1px solid #2b2b2b;
  background: linear-gradient(#454545, #585858);
}
.tab:first-child { border-left: 0; width: 18px; }
.tab .ic { opacity: .65; }
.tab.on { background: #5680c2; }
.tab.on .ic { opacity: 1; }
.use { margin-left: 8px; color: #fff; }
.use span { padding-top: 3px; }
.use input { margin-right: 8px; }
.pinbtn { margin-left: 14px; }
.snapmode { width: 36px; gap: 8px; border-left: 1px solid #222; }

/* timeline */
.timeline { flex: none; }
.track { position: relative; height: 49px; background: #434343; }
.range { position: absolute; left: 281px; top: 0; bottom: 0; width: 1209px; background: #727272; }
.playhead { position: absolute; left: 284px; top: 0; bottom: 0; width: 3px; background: #60c040; }
.scale {
  position: relative;
  display: flex;
  height: 13px;
  margin-bottom: 3px;
  padding-left: 17px;
  border-top: 1px solid #4a4a4a;
  border-bottom: 1px solid #4a4a4a;
  background: linear-gradient(#8c8c8c, #6f6f6f);
}
.frame { flex: 1 1 0; min-width: 0; text-align: center; font: 11px/13px "DejaVu Sans", sans-serif; }
.frame.neg { text-indent: -5px; }
.knob { position: absolute; left: 4px; top: 1px; width: 9px; height: 9px; border-radius: 50%; background: #5c5c5c; border: 1px solid #444; }
.end-knob { left: auto; right: 5px; background: none; border-left-color: transparent; }
.bar.time { border-bottom: 0; background: #727272; border-top: 1px solid #7e7e7e; padding: 0 0 0 9px; }
.time .menus { margin: 0 3px 0 4px; }
.round { border-radius: 10px; }
.stepper {
  display: flex;
  align-items: center;
  padding-top: 2px;
  background: linear-gradient(#9c9c9c, #b3b3b3);
}
.stepper i { width: 15px; text-align: center; color: #666; }
.stepper .num { flex: 1; }
.start { width: 115px; }
.end { width: 111px; border-left: 1px solid #2b2b2b; }
.current { width: 88px; }
.sync { width: 115px; margin-left: 4px; }
.keyfield { flex: none; width: 130px; height: 100%; border: 0; border-radius: 0; }
.keyfield input { width: 100px; }

/* right column */
.side { width: 252px; flex: none; display: flex; flex-direction: column; min-width: 0; }
.outliner, .props { position: relative; }
.outliner { border-bottom: 1px solid #000; }
.props { flex: 1; overflow: hidden; }
.bar.sub { height: 27px; padding: 0 0 0 9px; border-bottom: 1px solid #7e7e7e; background: #6c6c6c; }
.scenes { flex: 1; }
.scenes select { border-radius: 5px 0 0 5px; border-right: 0; padding-right: 0; }
.tree { position: relative; list-style: none; height: 122px; }
.tree::before { content: ""; position: absolute; left: 26px; top: 20px; height: 87px; width: 1px; background: #444; }
.tree li { display: flex; height: 20px; background: #777; }
.tree li:nth-child(odd) { background: #707070; }
.tree li.root .entry { background: #7d848c; }
.tree li:last-child { height: 22px; }
.entry { position: relative; flex: 1; display: flex; align-items: center; height: 20px; }
.col { width: 20px; display: flex; justify-content: center; align-items: center; border-left: 1px solid #666; }
.exp { width: 10px; height: 10px; flex: none; }
.stem { height: 1px; background: #444; }
.root .main, .layer .extra { border-radius: 50%; background: rgba(215, 215, 215, .5); }
.root .entry { padding-left: 3px; }
.root .stem { width: 8px; }
.layer .entry { padding-left: 27px; }
.layer .stem { width: 4px; background: none; }
.leaf .entry { padding-left: 41px; }
.object .entry { padding-left: 22px; }
.object .stem { width: 9px; }
.name { padding: 3px 0 0 3px; }
.active .name { color: #fff; }
.sep { width: 1px; height: 11px; margin: 0 9px 0 11px; background: #3c3c3c; }
.oscroll { margin: 2px 5px 4px; height: 14px; border: 1px solid #4a4a4a; border-radius: 7px; background: #5c5c5c; }
.thumb { width: 84%; height: 12px; border-radius: 6px; background: linear-gradient(#999, #7a7a7a); }
.tabs { margin-left: 7px; flex: 1; border-right: 0; border-radius: 5px 0 0 5px; }
.tabs .tab { flex: none; }
.tabs .tab.part { flex: 1; }
.crumbs { display: flex; align-items: center; height: 36px; padding-left: 10px; }
.crumbs .scene { margin-left: 6px; }
.crumbs .item { margin-left: 15px; }
.crumbs span { padding: 2px 0 0 4px; }
.arrow { margin-left: 5px; border: solid transparent; border-width: 3px 0 3px 4px; border-left-color: #333; }
.arrow.far { margin-left: 13px; }
.slots { display: flex; align-items: flex-start; gap: 8px; padding: 7px 8px 0; }
.slotbox { flex: 1; height: 43px; padding: 8px 5px 0; border: 1px solid #454545; border-radius: 5px; background: #7b7b7b; }
.slot { display: flex; align-items: center; gap: 5px; height: 19px; padding: 2px 2px 0; background: #5680c2; border-radius: 2px; }
.slotfoot { position: relative; display: flex; align-items: center; height: 10px; padding-left: 3px; }
.slotfoot .exp { width: 9px; height: 9px; }
.handle { width: 14px; height: 5px; margin-left: 88px; border: solid #222; border-width: 1px 0; }
.slotbtns { width: 20px; display: flex; flex-direction: column; border: 1px solid #2b2b2b; border-radius: 5px; overflow: hidden; }
.slotbtns .tool { width: 18px; height: 20px; border: 0; border-top: 1px solid #2b2b2b; }
.slotbtns .tool:first-child { height: 19px; border: 0; }
.slotbtns .tool.dark { background: #505050; }
.matrow { display: flex; justify-content: space-between; padding: 5px 8px 7px; }
.data { width: 80px; }
.props > .ptitle { margin: 0 5px; }
.pbody { padding: 8px 8px 8px 15px; }
.prow { display: flex; align-items: center; margin-bottom: 5px; }
.prow:last-child { margin-bottom: 0; }
.prow.shader { margin-bottom: 16px; }
.prow > :first-child { width: 80px; padding-top: 2px; }
.prow.in > :first-child { padding-left: 10px; }
.prow > :last-child { flex: 1; }
.dot { width: 8px; height: 8px; }
.drop .dot { position: absolute; right: 7px; top: 6px; }
.pbody .drop select { background: linear-gradient(#606060, #484848); }
.link { display: flex; align-items: center; justify-content: center; width: 20px; border-left: 1px solid #2b2b2b; background: linear-gradient(#555, #484848); }
.cap { border-radius: 10px 5px 5px 10px; }
.rough {
  flex: 1;
  padding: 2px 14px 0 0;
  background: linear-gradient(90deg, rgba(75, 75, 75, .6) 9px, transparent 9px), linear-gradient(#999, #b5b5b5);
}
</style>
